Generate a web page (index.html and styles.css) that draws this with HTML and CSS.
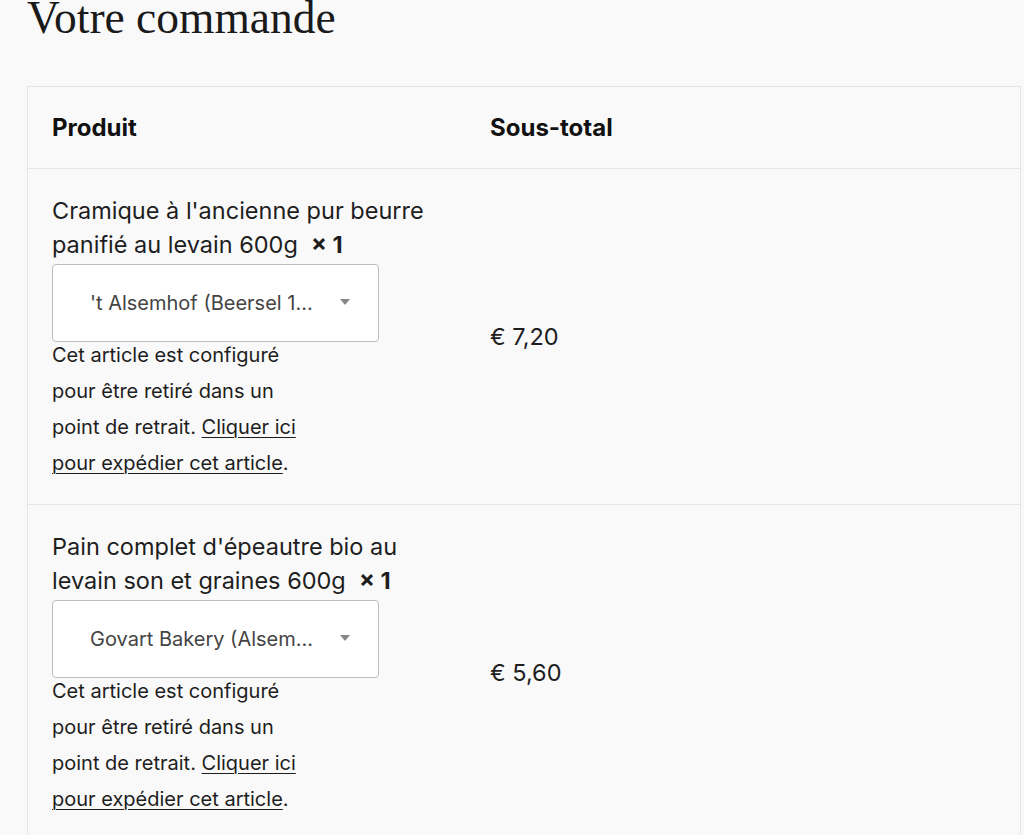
FILE: index.html
```html
<!DOCTYPE html>
<html lang="fr">
<head>
<meta charset="utf-8">
<title>Votre commande</title>
<link rel="stylesheet" href="styles.css">
</head>
<body>
<main class="page">
  <h1 class="title">Votre commande</h1>
  <table class="order">
    <thead>
      <tr>
        <th class="col-product">Produit</th>
        <th class="col-total">Sous-total</th>
      </tr>
    </thead>
    <tbody>
      <tr>
        <td class="col-product">
          <div class="name">Cramique à l'ancienne pur beurre panifié au levain 600g&nbsp; <strong class="qty">×&nbsp;1</strong></div>
          <div class="select"><span class="select-text">'t Alsemhof (Beersel 1...</span><span class="arrow"></span></div>
          <p class="note">Cet article est configuré pour être retiré dans un point de retrait. <a href="#">Cliquer ici pour expédier cet article</a>.</p>
        </td>
        <td class="col-total price">€ 7,20</td>
      </tr>
      <tr>
        <td class="col-product">
          <div class="name">Pain complet d'épeautre bio au levain son et graines 600g&nbsp; <strong class="qty">×&nbsp;1</strong></div>
          <div class="select"><span class="select-text">Govart Bakery (Alsem...</span><span class="arrow"></span></div>
          <p class="note">Cet article est configuré pour être retiré dans un point de retrait. <a href="#">Cliquer ici pour expédier cet article</a>.</p>
        </td>
        <td class="col-total price">€ 5,60</td>
      </tr>
    </tbody>
  </table>
</main>
</body>
</html>
```
FILE: styles.css
```css
html, body {
  margin: 0;
  padding: 0;
  background: #f9f9f9;
}
body {
  font-family: Inter, "Liberation Sans", sans-serif;
  color: #1e1e1e;
}
.page {
  padding: 0 3px 0 27px;
}
.title {
  font-family: "Liberation Serif", "DejaVu Serif", serif;
  font-weight: 400;
  font-size: 45.5px;
  line-height: 36px;
  margin: 0 0 50px;
  color: #1a1a1a;
}
.order {
  width: 100%;
  border-collapse: collapse;
  border: 1px solid #e5e5e5;
}
.order th,
.order td {
  text-align: left;
  padding: 0 24px;
}
.order th {
  font-weight: 700;
  font-size: 24px;
  line-height: 20px;
  padding-top: 31px;
  padding-bottom: 30px;
  color: #111;
}
.order tbody td {
  border-top: 1px solid #e5e5e5;
}
.col-product {
  width: 390px;
}
.order td.col-product {
  padding-top: 25px;
  padding-bottom: 23px;
  vertical-align: top;
}
.name {
  font-size: 23.5px;
  line-height: 34px;
  width: 390px;
}
.qty {
  font-weight: 700;
}
.select {
  margin-top: 2px;
  width: 325px;
  height: 76px;
  border: 1px solid #bdbdbd;
  border-radius: 4px;
  background: #fff;
  display: flex;
  align-items: center;
  box-sizing: content-box;
}
.select-text {
  flex: 1;
  padding-left: 37px;
  font-size: 20px;
  color: #444;
  white-space: nowrap;
}
.arrow {
  width: 0;
  height: 0;
  border-left: 5px solid transparent;
  border-right: 5px solid transparent;
  border-top: 6px solid #888;
  margin-right: 28px;
  margin-top: -2px;
}
.note {
  margin: -5px 0 0;
  width: 255px;
  font-size: 20px;
  line-height: 36px;
}
.note a {
  color: inherit;
  text-decoration: underline;
  text-underline-offset: 3px;
  text-decoration-thickness: 1px;
}
.price {
  vertical-align: middle;
  font-size: 23.5px;
}
```
